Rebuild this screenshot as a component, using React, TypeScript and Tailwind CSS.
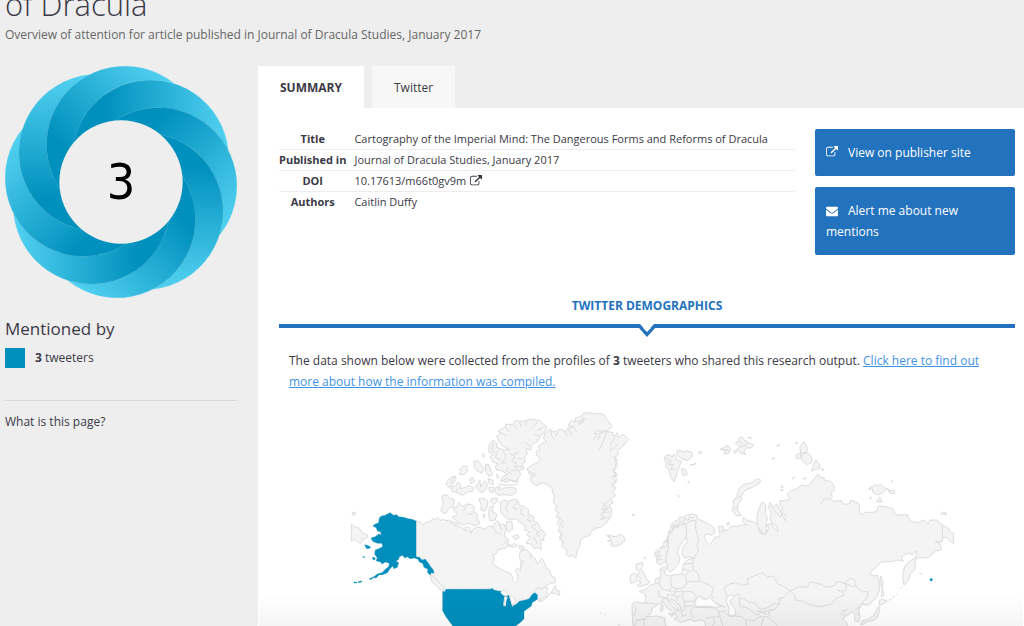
import React from 'react';

const PUBLICATION = [
  { label: 'Title', value: 'Cartography of the Imperial Mind: The Dangerous Forms and Reforms of Dracula' },
  { label: 'Published in', value: 'Journal of Dracula Studies, January 2017' },
  { label: 'DOI', value: '10.17613/m66t0gv9m', href: '#doi' },
  { label: 'Authors', value: 'Caitlin Duffy' },
];

const ExternalLinkIcon = ({ className }: { className?: string }) => (
  <svg viewBox="0 0 1792 1792" fill="currentColor" className={className} aria-hidden="true">
    <path d="M1408 928v320q0 119-84.5 203.5t-203.5 84.5h-832q-119 0-203.5-84.5t-84.5-203.5v-832q0-119 84.5-203.5t203.5-84.5h704q14 0 23 9t9 23v64q0 14-9 23t-23 9h-704q-66 0-113 47t-47 113v832q0 66 47 113t113 47h832q66 0 113-47t47-113v-320q0-14 9-23t23-9h64q14 0 23 9t9 23zm384-864v512q0 26-19 45t-45 19-45-19l-176-176-652 652q-10 10-23 10t-23-10l-114-114q-10-10-10-23t10-23l652-652-176-176q-19-19-19-45t19-45 45-19h512q26 0 45 19t19 45z" />
  </svg>
);

const EnvelopeIcon = ({ className }: { className?: string }) => (
  <svg viewBox="0 0 1792 1792" fill="currentColor" className={className} aria-hidden="true">
    <path d="M1792 710v794q0 66-47 113t-113 47h-1472q-66 0-113-47t-47-113v-794q44 49 101 87 362 246 497 345 57 42 92.5 65.5t94.5 48 110 24.5h2q51 0 110-24.5t94.5-48 92.5-65.5q170-123 498-345 57-39 100-87zm0-294q0 79-49 151t-122 123q-376 261-468 325-10 7-42.5 31t-54 38.5-52 32.5-57.5 27-50 9h-2q-23 0-50-9t-57.5-27-52-32.5-54-38.5-42.5-31q-91-64-262-182.5t-205-142.5q-62-42-117-115.5t-55-136.5q0-78 41.5-130t118.5-52h1472q65 0 112.5 47t47.5 113z" />
  </svg>
);

// Eight identical crescents, each turned 45 degrees from the one before
const Donut = ({ score }: { score: number }) => (
  <div className="relative w-full">
    <svg viewBox="-348 -348 696 696" className="block w-full" aria-hidden="true">
      <defs>
        <linearGradient id="band" gradientUnits="userSpaceOnUse" x1="-115" y1="0" x2="315" y2="0">
          <stop offset="0" stopColor="#0090bd" />
          <stop offset="0.15" stopColor="#0090bd" />
          <stop offset="1" stopColor="#50d0f0" />
        </linearGradient>
      </defs>
      {[0, 45, 90, 135, 180, 225, 270, 315].map(angle => (
        <path
          key={angle}
          transform={`rotate(${angle})`}
          d="M-121.4 36 A235 235 0 1 1 321.6 -95.3 A235 235 0 0 0 -121.4 36 Z"
          fill="url(#band)"
          stroke="url(#band)"
          strokeWidth="1"
        />
      ))}
      <circle r="185" fill="#eeeeee" />
    </svg>
    <div className="absolute inset-0 flex items-center justify-center font-['DejaVu_Sans_Condensed','DejaVu_Sans',sans-serif] text-[50px] leading-none text-black">
      {score}
    </div>
  </div>
);

// North America, coordinates relative to the Canadian group
const CANADA = [
  // mainland
  'M-42 362 L-30 366 -18 374 -12 366 0 366 8 356 15 359 22 352 30 362 38 358 48 362 58 360 66 366 76 366 84 378 100 386 112 380 120 385 122 402 128 388 140 382 150 382 165 388 176 378 186 380 195 368 205 362 212 376 222 372 228 390 222 408 236 418 232 432 245 436 252 430 262 436 252 442 232 438 226 446 205 448 200 460 190 465 192 480 186 490 200 500 225 515 242 520 248 532 246 540 256 550 264 540 262 520 256 510 264 505 272 512 274 490 270 476 268 462 275 450 290 450 300 460 315 475 322 492 335 475 345 490 347 502 360 512 364 528 376 534 376 548 362 550 345 560 330 570 345 560 355 566 348 576 360 584 348 592 330 602 322 598 318 580 310 582 297 596 280 600 262 612 246 618 242 605 238 590 222 588 185 567 40 570 30 560 18 550 10 538 0 522 8 512 -6 500 -14 487 -26 478 -42 470 Z',
  // Banks and Victoria
  'M36 288 L50 284 60 294 74 300 68 318 56 326 46 342 32 332 40 312 Z',
  'M68 320 L78 324 86 308 98 320 110 312 124 314 134 322 130 334 142 342 140 354 150 370 134 378 118 370 100 374 84 370 80 362 66 352 82 342 74 334 Z',
  // Baffin
  'M210 308 L222 300 236 304 248 298 262 300 270 316 282 320 296 330 294 342 312 350 310 362 324 370 330 382 348 404 340 414 342 422 332 420 334 450 322 442 312 446 302 432 288 430 300 412 290 404 298 396 284 390 286 378 268 366 258 356 240 360 224 350 212 336 Z',
  // Ellesmere
  'M200 108 L212 98 204 94 228 80 226 72 248 74 256 62 278 64 300 58 330 62 342 74 350 80 344 98 330 108 326 122 304 136 302 150 288 146 292 162 282 172 286 186 276 190 282 206 268 212 272 226 262 236 264 248 244 240 230 246 212 240 220 228 232 224 216 212 200 210 196 198 206 192 188 186 180 170 190 164 176 156 178 132 190 120 202 132 200 142 220 150 240 150 224 142 210 130 Z',
  'M196 264 L210 258 206 270 222 264 240 262 256 264 260 276 246 286 222 284 204 286 196 276 Z',
  // Queen Elizabeth Islands
  'M48 250 L56 238 66 230 76 228 78 238 68 252 58 262 50 256 Z',
  'M62 262 L76 258 84 246 92 254 92 266 106 262 118 256 130 264 128 274 112 276 98 286 86 282 78 276 66 274 Z',
  'M88 210 L98 198 110 198 112 212 102 224 86 222 96 214 Z',
  'M132 184 L144 182 152 192 162 206 156 220 144 214 134 204 Z',
  'M166 194 L176 194 182 210 188 222 178 230 168 216 Z',
  'M118 238 L128 232 134 244 124 252 Z M136 262 L150 240 152 262 164 242 172 250 170 266 156 278 146 270 Z M174 236 L188 240 190 254 178 250 Z M176 262 L192 262 190 278 180 276 Z',
  'M146 298 L162 294 174 304 172 318 164 334 152 330 154 314 Z M184 296 L200 294 204 304 190 314 182 306 Z M178 322 L190 318 186 334 200 342 196 360 180 362 176 346 Z M158 342 L166 346 162 354 Z',
  'M230 364 L246 366 248 388 236 396 228 384 Z M248 410 L262 404 268 412 256 420 Z M268 436 L284 442 280 450 266 444 Z',
  'M158 160 L164 168 160 172 Z M200 222 L208 230 202 236 Z',
  // Newfoundland and Nova Scotia
  'M370 566 L376 556 378 570 390 574 388 586 374 580 362 580 Z M326 602 L340 592 354 588 344 598 330 606 Z',
  // Vancouver Island
  'M0 524 L12 530 26 548 44 562 40 572 26 566 16 554 6 546 Z',
];

const GREENLAND = [
  'M345 102 L352 94 360 88 370 96 380 94 388 88 400 90 406 96 414 84 430 80 414 76 424 62 436 66 436 54 452 50 460 40 480 38 492 42 508 40 522 44 530 58 540 70 546 80 534 90 520 94 500 92 492 104 510 98 530 94 548 98 550 110 562 98 566 114 578 102 596 118 584 132 574 144 562 150 566 162 556 172 562 180 554 190 560 202 552 212 562 226 548 232 558 246 544 254 558 264 548 276 556 288 542 296 550 308 538 314 545 330 542 350 530 368 512 382 498 384 484 394 480 406 462 412 452 420 450 438 442 450 437 475 428 466 418 470 408 462 410 448 396 440 398 424 388 414 394 402 384 392 390 380 382 370 388 356 378 350 386 338 376 330 380 318 370 306 374 290 368 276 366 264 352 254 340 248 326 252 322 258 304 246 300 232 312 228 298 222 292 206 302 198 326 186 330 174 320 166 318 154 330 150 324 140 336 130 350 124 340 116 Z',
  'M530 406 L540 412 536 404 552 410 562 408 574 402 584 414 584 424 570 434 554 440 540 434 546 426 532 422 544 418 Z',
];

const GREENLAND_COAST =
  'M362 92 L366 108 372 118 M382 96 L378 110 M404 94 L412 108 M414 84 L424 100 420 110 M430 80 L440 96 M440 66 L456 60 446 74 462 64 456 54 470 58 M500 106 L490 118 M512 100 L502 122 M530 98 L518 128 508 148 M556 112 L540 136 M564 132 L548 150 M545 140 L540 156 M548 232 L556 222 M540 300 L522 312 516 330 530 324 512 344 524 350 510 358 536 352 M520 316 L538 322 518 338 540 336 M388 350 L400 366 390 370 402 384 M388 392 L398 404 392 416 404 430 M300 214 L318 226 M552 170 L562 196 550 208 560 240 548 262';

const ARCTIC_COAST =
  'M212 98 L230 108 M226 82 L240 96 M250 74 L262 88 M268 66 L276 82 M290 62 L286 78 M322 66 L308 82 M340 82 L322 90 M328 108 L312 104 M300 138 L284 126 M190 128 L186 150 196 158 M204 152 L196 172 214 180 M220 154 L228 172 214 190 230 188 M240 160 L256 172 244 184 262 190 M266 156 L250 164 M278 176 L262 174 M276 200 L252 198 264 210 240 212 M236 200 L228 212 246 222 M210 246 L232 234 250 246 266 236 M206 252 L228 256 262 254 M70 232 L62 250 M86 262 L78 274 M262 306 L248 322 262 328 M238 306 L226 322 M276 324 L270 340 284 346 M300 346 L292 360 306 366 M318 372 L304 380 322 392 M334 392 L318 400 330 410 M310 410 L322 430 M228 322 L236 338 M110 318 L100 334 M130 340 L112 344 M60 366 L80 380 M100 390 L112 392 M186 380 L200 398 212 402 M206 370 L216 392 M232 420 L216 436 M270 500 L280 480 M330 560 L310 574 M300 460 L304 476';

const ALASKA = [
  'M116 368 L118 354 124 348 136 346 142 342 151 338 160 346 170 344 176 350 190 352 204 356 216 358 228 363 228 470 238 472 246 480 256 478 264 488 272 500 280 510 282 520 274 518 270 525 262 516 264 508 252 502 248 490 238 486 234 478 224 474 210 476 202 470 194 474 188 466 178 470 176 478 168 484 176 488 172 502 162 506 158 498 150 506 142 518 128 524 118 524 108 534 100 532 112 522 126 518 136 508 146 500 148 490 136 486 126 492 122 486 108 482 112 474 104 462 106 450 116 446 128 440 126 430 112 430 98 424 93 414 106 410 116 402 124 404 122 396 112 392 108 382 100 380 102 374 Z',
  'M74 434 L88 438 92 444 80 446 Z M98 472 L106 474 104 480 98 478 Z M68 470 L74 470 72 474 Z M42 546 L50 546 50 549 42 549 Z M54 545 L64 543 66 546 56 548 Z M88 536 L102 530 100 534 90 539 Z M162 494 L172 492 168 500 Z',
];

const EURASIA =
  'M166 456 L176 446 184 444 192 428 204 412 206 394 214 384 212 374 226 362 236 360 238 352 254 350 262 344 276 342 292 346 290 356 306 362 326 372 342 384 344 398 336 406 318 402 312 408 318 424 328 434 338 424 344 412 358 410 360 400 354 380 368 378 372 386 364 396 384 388 394 378 410 380 424 374 440 376 428 364 430 352 442 362 462 366 476 376 476 390 484 402 496 404 506 386 502 374 512 370 524 388 534 394 530 378 518 372 510 356 514 340 506 322 510 308 520 320 530 312 540 330 550 352 556 362 556 344 544 336 548 322 540 318 540 302 556 302 572 296 562 284 570 274 590 266 606 254 618 258 628 254 642 236 655 222 660 232 672 234 674 242 692 244 702 256 702 272 692 280 698 290 690 298 700 304 724 302 730 312 748 312 752 300 768 306 778 312 778 334 786 346 796 336 812 338 830 334 836 318 854 320 878 326 884 338 894 346 922 344 932 364 954 368 972 360 984 372 990 360 1010 360 1026 374 1046 386 1052 398 1061 400 1061 430 1050 424 1040 412 1028 414 1026 424 1006 426 1020 430 1025 448 1006 454 986 472 966 474 952 472 944 486 946 506 930 524 926 540 912 556 908 530 912 506 922 488 942 476 950 464 950 452 936 466 930 458 916 462 904 474 910 484 892 480 880 484 844 486 828 502 808 520 822 528 832 526 838 546 838 572 830 592 816 606 802 616 784 612 776 632 780 650 774 666 764 662 764 644 756 634 740 648 730 640 742 628 726 634 724 642 736 650 728 656 740 668 744 690 100 690 97 650 96 612 104 606 134 610 138 592 132 580 118 574 138 568 150 556 166 550 166 538 182 530 180 510 190 498 200 504 192 520 206 528 226 524 244 522 248 508 250 492 264 478 284 474 268 470 252 474 246 458 250 440 262 424 258 414 246 426 236 444 232 458 240 476 236 490 222 508 210 516 202 506 200 488 192 486 180 496 170 488 170 474 164 466 Z';

const SEAS = [
  // western and eastern Mediterranean
  'M140 650 L152 640 158 624 176 612 190 606 202 622 220 634 232 652 222 656 234 662 240 668 254 664 270 658 282 664 302 660 314 664 318 690 240 690 218 680 196 678 194 654 170 648 Z',
  // Adriatic
  'M202 596 L214 606 230 620 238 634 226 628 208 612 Z',
  // Black Sea
  'M284 606 L292 592 304 588 306 596 318 598 330 592 342 606 364 618 346 622 322 618 300 620 286 618 Z',
  // Caspian
  'M378 600 L384 588 398 584 402 592 390 602 394 614 404 624 408 642 396 648 386 642 388 628 Z',
];

const EURASIA_ISLANDS = [
  // Britain, Ireland, Denmark
  'M108 494 L126 486 130 498 122 506 132 520 138 534 150 546 140 554 118 560 112 556 124 548 116 544 122 534 112 526 118 514 108 508 Z M92 526 L104 518 112 526 110 544 94 550 90 542 Z',
  // Svalbard
  'M196 168 L210 164 216 172 222 162 230 178 244 184 238 200 232 214 228 230 222 246 212 230 206 208 196 200 202 188 192 182 Z M230 154 L240 150 248 156 260 152 276 158 276 170 264 182 248 178 232 168 Z M244 206 L256 208 262 222 250 228 Z',
  'M294 158 L306 154 302 160 Z M270 196 L288 190 284 194 Z M264 244 L268 246 264 248 Z M236 286 L238 290 235 290 Z M96 344 L104 342 100 348 Z M134 472 L138 474 134 476 Z',
  // Franz Josef Land
  'M360 148 L374 142 384 136 392 148 386 160 372 162 376 152 Z M400 154 L410 150 408 160 Z M406 128 L418 124 416 116 426 110 432 120 446 128 460 134 454 144 438 144 432 154 436 164 420 158 412 146 420 140 Z M444 112 L454 114 450 116 Z',
  // Novaya Zemlya
  'M396 330 L402 316 400 304 410 290 418 264 434 252 452 250 472 236 482 240 478 250 456 262 438 270 424 284 424 300 416 310 410 324 424 348 408 346 Z',
  // Yamal and the gulf
  'M470 358 L476 328 486 306 498 314 496 340 502 352 498 380 500 398 486 400 474 380 Z',
  // Severnaya Zemlya
  'M586 128 L592 126 590 132 Z M600 140 L612 124 622 144 620 158 602 160 Z M588 166 L600 160 604 174 590 176 Z M602 164 L620 158 634 168 636 186 622 194 608 184 Z M634 214 L642 190 648 180 660 196 658 206 644 208 Z M664 206 L672 210 668 212 Z',
  'M530 138 L538 134 538 138 Z M516 174 L524 174 522 178 Z M544 258 L550 260 546 264 Z M542 270 L550 268 546 274 Z M576 236 L584 230 580 236 Z M610 236 L618 232 614 238 Z M380 370 L386 366 388 374 382 376 Z',
  // New Siberian Islands
  'M808 264 L814 260 810 270 Z M816 262 L824 254 834 258 840 252 850 260 858 268 848 280 832 284 818 276 Z M860 264 L872 272 884 272 884 280 870 280 Z M830 304 L840 292 846 306 Z M872 244 L878 242 876 246 Z M808 294 L814 292 812 298 Z',
  // Wrangel
  'M1022 342 L1028 336 1038 338 1040 344 Z',
  // Sakhalin, Kurils, Japan
  'M842 528 L850 548 846 562 852 586 844 590 846 566 840 548 Z M838 602 L848 598 862 604 848 612 838 616 Z M836 620 L840 628 832 652 820 662 804 664 792 672 782 674 784 664 806 656 820 648 826 636 Z M866 602 L874 596 M878 592 L884 588 M888 584 L892 582 M900 566 L906 560 M956 518 L968 524',
  // Corsica and Sardinia, Azores
  'M184 612 L190 616 188 632 182 636 Z M206 640 L220 644 216 650 Z M0 638 L4 640 M14 642 L18 644 M54 672 L60 674',
];

const BORDERS =
  'M180 444 L200 440 204 408 226 382 246 374 258 372 274 362 288 362 M258 374 L260 400 258 414 M288 362 L286 384 296 418 290 440 296 450 284 472 M204 408 L206 440 198 466 198 488 M284 474 L278 490 280 508 294 520 300 544 322 552 340 564 334 586 340 594 M250 492 L278 490 M248 508 L274 514 280 508 M258 526 L268 514 M214 530 L212 548 216 562 232 566 254 562 260 546 256 526 244 522 M260 546 L300 544 M182 532 L176 548 184 566 204 572 216 562 M176 548 L166 552 M138 608 L170 614 M204 572 L216 576 232 568 M176 570 L178 590 200 594 204 584 222 586 M222 586 L226 576 248 572 250 584 232 592 222 586 M248 576 L272 574 288 586 288 604 252 604 246 590 M252 604 L254 618 280 618 M232 592 L226 604 240 618 244 634 256 626 254 618 M210 594 L222 602 M240 618 L232 608 M244 634 L248 650 258 642 M276 624 L300 622 344 624 356 634 358 650 330 652 316 656 M274 628 L272 640 282 654 M104 616 L108 628 102 650 M140 608 L142 612 M100 690 L110 660 134 658 130 690 M110 660 L134 656 140 650 M346 610 L376 622 M356 634 L376 634 M360 650 L372 690 M340 654 L344 672 330 684 M376 640 L390 650 404 648 424 650 438 660 440 690 M380 588 L372 564 388 552 408 548 426 556 444 552 442 536 466 526 486 518 502 530 518 528 534 552 556 562 570 572 600 560 622 562 630 546 660 552 680 562 702 558 712 544 730 548 760 560 770 556 M400 588 L416 582 418 598 430 594 446 606 464 608 480 628 500 624 524 610 538 612 538 596 552 592 570 572 M418 598 L420 620 440 622 464 640 474 646 M470 632 L490 636 502 632 524 628 M474 646 L480 636 500 642 M440 660 L464 662 480 650 500 650 516 660 534 680 M490 654 L484 678 M538 612 L524 628 506 632 510 650 M570 572 L584 584 586 600 610 604 634 616 660 620 694 612 708 596 730 586 728 574 712 570 M728 574 L740 568 734 548 750 534 764 540 768 560 786 576 804 574 802 592 790 604 786 616 M764 632 L784 614 M1027 374 L1027 424 M770 642 L780 640';

const NORWAY_COAST =
  'M214 384 L222 374 218 390 230 372 234 384 240 364 250 372 254 354 264 362 270 348 278 356 284 348 M166 458 L180 454 168 470 184 466 172 480 188 478 M206 394 L218 398 M192 428 L204 424 M198 176 L212 182 206 196 220 192 212 208 226 206 M414 124 L428 132 422 142 442 134 438 122 M370 148 L388 152 M512 320 L524 332 540 350 552 340 M182 506 L194 514 M690 298 L676 294 660 314 M430 280 L410 300 M404 326 L416 320';

const WorldMap = () => (
  <div className="relative">
    <svg viewBox="-9 0 1860 678" className="mx-auto block w-full max-w-[620px]" role="img" aria-label="Map of tweeters by country">
      <g stroke="#dcdcdc" strokeWidth="3" strokeLinejoin="round" fill="#f4f4f4">
        <path d="M34 372 L46 382 58 384 66 398 84 406 80 414 68 418 62 430 50 424 44 418 34 424 Z M36 338 L44 336 48 342 38 346 Z" />
        <g transform="translate(270 0)">
          {CANADA.map(d => <path key={d} d={d} />)}
          {GREENLAND.map(d => <path key={d} d={d} />)}
          <path d={GREENLAND_COAST} fill="none" />
          <path d={ARCTIC_COAST} fill="none" />
        </g>
        <g transform="translate(780 0)">
          <path d={EURASIA} />
          {SEAS.map(d => <path key={d} d={d} fill="#ffffff" />)}
          {EURASIA_ISLANDS.map(d => <path key={d} d={d} />)}
          <path d={BORDERS} fill="none" />
          <path d={NORWAY_COAST} fill="none" />
          {/* Italy */}
          <path d="M186 600 L200 594 206 606 218 620 232 630 226 634 222 644 216 634 200 622 Z" />
        </g>
      </g>
      <g fill="#008fbd" stroke="#0086b2" strokeWidth="1">
        {ALASKA.map(d => <path key={d} d={d} />)}
        <path d="M308 574 L314 576 318 568 452 568 456 565 462 570 474 573 490 574 486 584 500 588 508 586 512 602 516 620 530 612 538 604 558 600 568 596 576 584 584 578 592 584 592 598 576 608 574 618 560 628 552 634 552 656 540 668 524 680 340 680 328 664 318 650 308 632 Z" />
        <path d="M1770 536 L1777 536 1777 542 1770 542 Z" />
      </g>
      {/* Great Lakes */}
      <path d="M482 576 L492 570 504 582 500 588 488 584 Z M494 590 L502 592 498 602 496 618 491 616 Z M508 586 L520 590 528 604 516 614 512 600 Z" fill="#ffffff" stroke="#dedede" strokeWidth="3" />
    </svg>
    <div className="pointer-events-none absolute inset-x-0 bottom-0 -ml-5 -mr-2 h-8 bg-linear-to-b from-transparent to-black/4"></div>
  </div>
);

export default function App() {
  return (
    <div className="min-h-screen overflow-hidden bg-[#eeeeee] font-['Open_Sans',sans-serif] text-[12px] leading-[21px] text-[#3b3946]">
      <header className="-mt-4 px-[5px]">
        <h1 className="text-[31px] font-light leading-10">of Dracula</h1>
        <p className="text-[#666666]">Overview of attention for article published in Journal of Dracula Studies, January 2017</p>
      </header>

      <div className="mt-[21px] flex items-start">
        <aside className="w-[258px] shrink-0 pl-[5px] pr-[21px]">
          <Donut score={3} />
          <h2 className="mt-[19px] text-[17px] leading-6">Mentioned by</h2>
          <div className="mt-1.5 flex items-center gap-2.5">
            <span className="size-5 bg-[#0090bd]"></span>
            <span><strong>3</strong> tweeters</span>
          </div>
          <div className="mt-8 border-t border-[#d8d8d8] pt-2.5">
            <a href="#about" className="text-[#3b3946]">What is this page?</a>
          </div>
        </aside>

        <main className="min-w-0 flex-1">
          <nav className="flex gap-2">
            <button type="button" className="h-[42px] bg-white px-[22px] font-bold">SUMMARY</button>
            <button type="button" className="h-[42px] bg-[#f7f7f7] px-[22px]">Twitter</button>
          </nav>

          <div className="bg-white pl-[21px] pr-[9px] pt-[21px]">
            <div className="flex items-start gap-5">
              <table className="flex-1 border-collapse text-[11px] leading-5">
                <tbody>
                  {PUBLICATION.map(row => (
                    <tr key={row.label} className="border-b border-[#eeeeee] last:border-b-0">
                      <th className="w-[65px] whitespace-nowrap p-0 text-center font-bold">{row.label}</th>
                      <td className="p-0 pl-2">
                        {row.href ? (
                          <a href={row.href} className="inline-flex items-center gap-1">
                            {row.value} <ExternalLinkIcon className="size-3" />
                          </a>
                        ) : row.value}
                      </td>
                    </tr>
                  ))}
                </tbody>
              </table>

              <div className="flex w-[200px] shrink-0 flex-col gap-[11px]">
                <a href="#publisher" className="rounded-xs bg-[#2372be] px-[11px] py-[13px] text-white">
                  <ExternalLinkIcon className="mr-2.5 inline size-3 align-[-1px]" />
                  View on publisher site
                </a>
                <a href="#alert" className="rounded-xs bg-[#2372be] px-[11px] py-[13px] text-white">
                  <EnvelopeIcon className="mr-2.5 inline size-3 align-[-2px]" />
                  Alert me about new mentions
                </a>
              </div>
            </div>

            <section className="mt-10">
              <h3 className="text-center font-bold text-[#2372be]">TWITTER DEMOGRAPHICS</h3>
              <div className="relative mt-2 h-1 bg-[#2372be]">
                <svg viewBox="0 0 20 14" className="absolute left-1/2 top-0 h-3.5 w-5 -translate-x-1/2" aria-hidden="true">
                  <path d="M3 0 L10 8 17 0 Z" fill="#ffffff" />
                  <path d="M0 0 L2 0 10 8 18 0 20 0 20 4 18 4 10 13 2 4 0 4 Z" fill="#2372be" />
                </svg>
              </div>
              <p className="mt-[22px] px-2.5">
                The data shown below were collected from the profiles of <strong>3</strong> tweeters who shared this research output.{' '}
                <a href="#compiled" className="text-[#4193e5] underline">Click here to find out more about how the information was compiled.</a>
              </p>
              <div className="mt-2">
                <WorldMap />
              </div>
            </section>
          </div>
        </main>
      </div>
    </div>
  );
}
